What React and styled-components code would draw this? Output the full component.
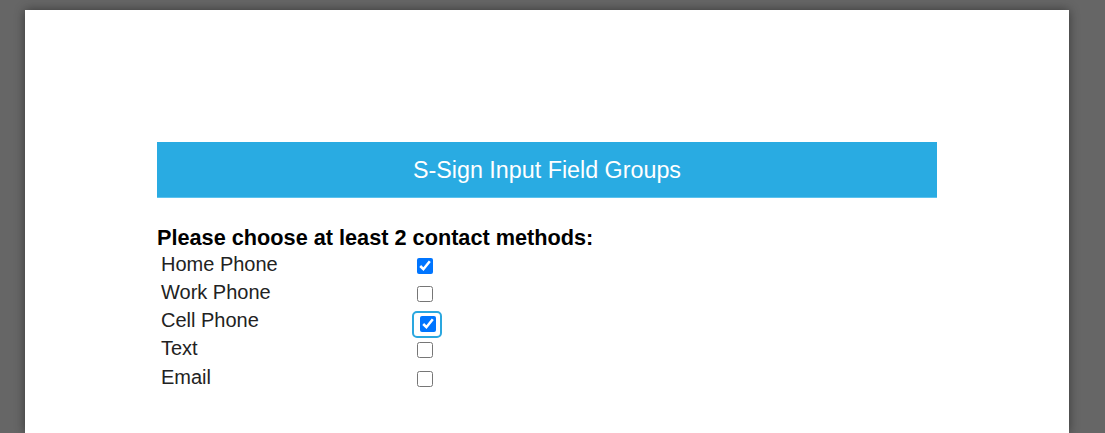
import React from 'react';
import styled, { createGlobalStyle } from 'styled-components';

const GlobalStyle = createGlobalStyle`
  html, body {
    margin: 0;
    padding: 0;
    background: #666666;
    height: 100%;
    overflow: hidden;
  }
  body {
    font-family: "Liberation Sans", Arial, sans-serif;
  }
`;

const Page = styled.div`
  margin: 10px 0 0 25px;
  width: 1044px;
  height: 423px;
  background: #ffffff;
  box-shadow: 0 0 10px rgba(0, 0, 0, 0.45);
  padding: 132px 0 0 132px;
  box-sizing: border-box;
`;

const TitleBar = styled.div`
  width: 780px;
  height: 56px;
  background: #29abe2;
  border-bottom: 1px solid #5cc2ee;
  box-sizing: border-box;
  display: flex;
  align-items: center;
  justify-content: center;
  padding-top: 2px;
  color: #ffffff;
  font-size: 23.3px;
`;

const Question = styled.div`
  margin-top: 27px;
  font-size: 21.7px;
  font-weight: bold;
  color: #000000;
  line-height: 25px;
`;

const Options = styled.div`
  display: grid;
  grid-template-columns: 256px auto;
  grid-auto-rows: 28.25px;
  align-items: center;
  padding-left: 4px;
`;

const Label = styled.div`
  font-size: 20px;
  color: #222222;
  line-height: 23px;
`;

const BoxCell = styled.div`
  display: flex;
  align-items: center;
  height: 100%;
  padding-top: 3px;
  box-sizing: border-box;
`;

const FocusRing = styled.span`
  display: inline-flex;
  align-items: center;
  justify-content: center;
  margin-left: ${p => (p.$focused ? '-5px' : '0')};
  margin-top: ${p => (p.$focused ? '4px' : '0')};
  width: ${p => (p.$focused ? '30px' : 'auto')};
  height: ${p => (p.$focused ? '27px' : 'auto')};
  padding-left: ${p => (p.$focused ? '1px' : '0')};
  box-sizing: border-box;
  border: ${p => (p.$focused ? '2px solid #2aa7df' : 'none')};
  border-radius: 5px;
`;

const Check = styled.input.attrs({ type: 'checkbox' })`
  width: 16px;
  height: 16px;
  margin: 0;
  accent-color: #0075ff;
`;

const options = [
  { label: 'Home Phone', checked: true },
  { label: 'Work Phone', checked: false },
  { label: 'Cell Phone', checked: true, focused: true },
  { label: 'Text', checked: false },
  { label: 'Email', checked: false },
];

export default function App() {
  return (
    <>
      <GlobalStyle />
      <Page>
        <TitleBar>S-Sign Input Field Groups</TitleBar>
        <Question>Please choose at least 2 contact methods:</Question>
        <Options>
          {options.map(o => (
            <React.Fragment key={o.label}>
              <Label>{o.label}</Label>
              <BoxCell>
                <FocusRing $focused={o.focused}>
                  <Check defaultChecked={o.checked} />
                </FocusRing>
              </BoxCell>
            </React.Fragment>
          ))}
        </Options>
      </Page>
    </>
  );
}
